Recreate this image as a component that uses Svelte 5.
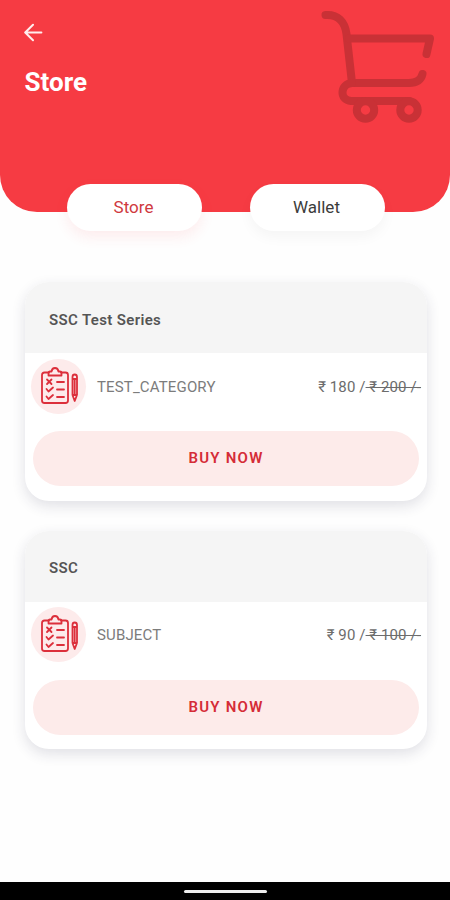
<script>
  const tabs = ['Store', 'Wallet'];
  const items = [
    { title: 'SSC Test Series', kind: 'TEST_CATEGORY', price: 180, old: 200 },
    { title: 'SSC', kind: 'SUBJECT', price: 90, old: 100 }
  ];
  let active = $state('Store');
</script>

<div class="screen">
  <header>
    <button class="back" aria-label="Back">
      <svg width="20" height="20" viewBox="0 0 20 20"><path d="M17.400 9.500H1.500M9 1.800L1.200 9.500L9 17.200" /></svg>
    </button>
    <h1>Store</h1>
    <svg class="cart" width="150" height="140" viewBox="0 0 150 140">
      <path d="M25.5 15C38 14 45 22 46.500 34L52 83H109C117 83 121 80 122.500 74" />
      <path d="M49 38.500H130L126.500 54" />
      <path d="M52 83C40 84 39 100 51 101H109" />
      <circle cx="65.500" cy="110" r="8.700" />
      <circle cx="109" cy="110" r="8.700" />
    </svg>
  </header>

  <nav>
    {#each tabs as tab}
      <button class="tab" class:active={active === tab} onclick={() => (active = tab)}>{tab}</button>
    {/each}
  </nav>

  <main>
    {#each items as item}
      <section class="card">
        <h2>{item.title}</h2>
        <div class="row">
          <span class="badge">
            <svg width="38" height="40" viewBox="0 0 38 40">
              <path d="M9 5.500H4.500Q2 5.500 2 8V33.500Q2 36 4.500 36H25.500Q28 36 28 33.500V8Q28 5.500 25.500 5.500H21" />
              <path d="M8.500 8.500V6Q8.500 4.500 10 4.500H11.500Q12 1 15 1Q18 1 18.500 4.500H20Q21.500 4.500 21.500 6V8.500Z" />
              <path d="M7 12.500L11.500 17M11.500 12.500L7 17M17 15H24M6.500 22L8.500 24.500L13 20.500M17 22.500H24M6.500 29.500L8.500 32L13 28M17 30H24" />
              <path d="M32.500 10Q32.500 7.500 34.700 7.500Q37 7.500 37 10V28L34.700 34L32.500 28ZM32.500 12H37M32.500 28H37M34.700 12V28" />
            </svg>
          </span>
          <span class="kind">{item.kind}</span>
          <span class="price">₹ {item.price} /<s>&nbsp;₹ {item.old} /-</s></span>
        </div>
        <button class="buy">BUY NOW</button>
      </section>
    {/each}
  </main>

  <footer><span></span></footer>
</div>

<style>
  :global(body) { margin: 0; background: #fff; }
  .screen {
    width: 450px;
    height: 900px;
    display: flex;
    flex-direction: column;
    overflow: hidden;
    background: #fefefe;
    font-family: Roboto, sans-serif;
  }
  button { border: 0; padding: 0; font-family: inherit; cursor: pointer; }
  header {
    position: relative;
    flex: none;
    height: 212px;
    box-sizing: border-box;
    padding: 23px 24px 0;
    background: #f63b43;
    border-radius: 0 0 37px 37px;
  }
  .back { display: block; width: 20px; height: 20px; background: none; }
  .back svg { display: block; }
  svg { fill: none; stroke-linecap: round; stroke-linejoin: round; }
  .back path { stroke: #ffeded; stroke-width: 2; }
  h1 { margin: 24px 0 0 0.500px; font-size: 26px; line-height: 31px; font-weight: 700; color: #fff; }
  .cart { position: absolute; top: 0; right: 0; stroke: #c93136; stroke-width: 8; }
  nav { position: relative; display: flex; gap: 48px; padding-left: 67px; margin-top: -28px; height: 47px; flex: none; }
  .tab {
    width: 135px;
    box-sizing: border-box;
    border-radius: 24px;
    background: #fff;
    color: #3c3c3c;
    font-size: 17px;
    padding: 0 2px 1px 0;
    box-shadow: 0 6px 14px rgba(0, 0, 0, 0.04);
  }
  .tab.active { color: #cf3940; box-shadow: 0 6px 14px rgba(246, 59, 67, 0.09); }
  main { flex: 1; display: flex; flex-direction: column; gap: 30px; padding: 51px 23px 0 25px; }
  .card {
    height: 218.500px;
    border-radius: 24px;
    background: #fff;
    box-shadow: 0 5px 14px rgba(40, 45, 75, 0.14);
  }
  h2 {
    margin: 0;
    height: 71px;
    box-sizing: border-box;
    padding: 4px 24px 0;
    display: flex;
    align-items: center;
    border-radius: 24px 24px 0 0;
    background: #f5f5f5;
    color: #555;
    font-size: 15px;
    font-weight: 600;
    letter-spacing: 0.350px;
  }
  .row { display: flex; align-items: center; height: 56px; padding: 5px 6px 0; }
  .badge { display: flex; align-items: center; justify-content: center; width: 55px; height: 55px; border-radius: 50%; background: #fdebeb; }
  .badge svg { stroke: #dc2f3b; stroke-width: 1.800; margin-top: 1px; }
  .kind { margin: 1px 0 0 11px; font-size: 15px; letter-spacing: 0.150px; color: #7c7c7c; }
  .price { margin: 1px 0 0 auto; font-size: 15px; letter-spacing: 0.100px; color: #6c6c6c; white-space: nowrap; }
  .buy {
    display: block;
    width: 386px;
    height: 55px;
    margin: 17px 0 0 8px;
    padding-bottom: 1px;
    border-radius: 28px;
    background: #fdebea;
    color: #d52c37;
    font-size: 15px;
    font-weight: 600;
    letter-spacing: 1.250px;
  }
  footer { flex: none; height: 18px; display: flex; justify-content: center; align-items: center; background: #000; }
  footer span { width: 83px; height: 3px; border-radius: 2px; background: #eee; }
</style>
